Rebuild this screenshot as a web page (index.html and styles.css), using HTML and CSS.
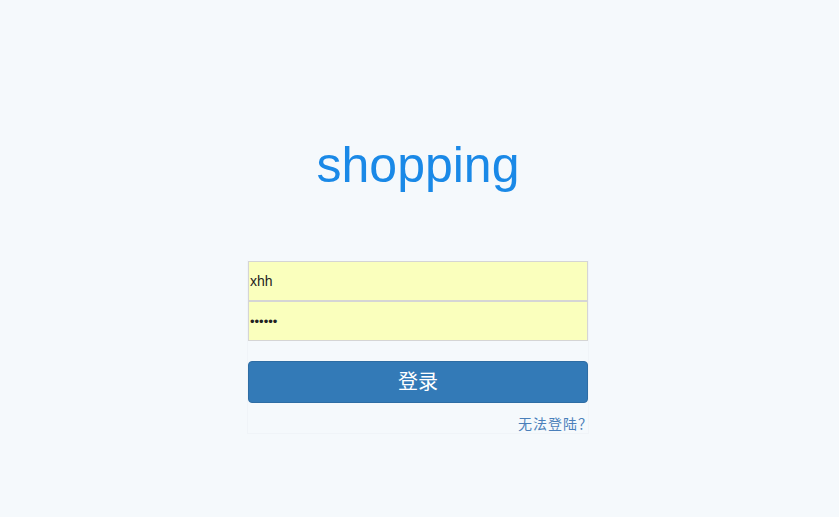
FILE: index.html
```html
<!DOCTYPE html>
<html>
<head>
<meta charset="utf-8">
<link rel="stylesheet" href="styles.css">
</head>
<body>
<div class="page">
  <h1 class="title">shopping</h1>
  <form class="login">
    <div class="fields">
      <input class="field" type="text" value="xhh">
      <input class="field pw" type="password" value="123456">
    </div>
    <button class="btn" type="button">登录</button>
    <div class="help"><a href="#">无法登陆？</a></div>
  </form>
</div>
</body>
</html>
```
FILE: styles.css
```css
html, body {
  margin: 0;
  padding: 0;
  background: #f5f9fc;
  font-family: "Liberation Sans", Arial, "Noto Sans CJK SC", sans-serif;
}
.page {
  width: 836px;
  display: flex;
  flex-direction: column;
  align-items: center;
  padding-top: 136px;
}
.title {
  margin: 0;
  font-size: 50px;
  line-height: 58px;
  font-weight: normal;
  color: #1a89e7;
}
.login {
  margin-top: 66px;
  box-sizing: border-box;
  width: 342px;
  border: 1px solid #f0f4f8;
  border-top-color: transparent;
  display: flex;
  flex-direction: column;
}
.fields {
  display: flex;
  flex-direction: column;
}
.field {
  box-sizing: border-box;
  width: 340px;
  height: 40px;
  margin: 0;
  padding: 0 0 0 1px;
  border: 1px solid #d5d5d5;
  background: #faffbd;
  font-family: "Liberation Sans", Arial, sans-serif;
  font-size: 14px;
  color: #222;
  outline: none;
}
.field.pw {
  margin-top: -1px;
  border-top-width: 2px;
  height: 41px;
  font-size: 13px;
}
.btn {
  margin-top: 20px;
  box-sizing: border-box;
  width: 340px;
  height: 42px;
  background: #337ab7;
  border: 1px solid #2e6da4;
  border-radius: 4px;
  color: #fff;
  font-family: "Noto Sans CJK SC", sans-serif;
  font-size: 20px;
  line-height: 26px;
  padding: 0 0 2px;
  cursor: pointer;
}
.help {
  display: flex;
  justify-content: flex-end;
  padding: 11px 0 0 0;
  height: 19px;
}
.help a {
  font-family: "Noto Sans CJK SC", sans-serif;
  font-size: 14px;
  line-height: 18px;
  letter-spacing: 1px;
  margin-right: -5px;
  color: #4a7fba;
  text-decoration: none;
}
```
